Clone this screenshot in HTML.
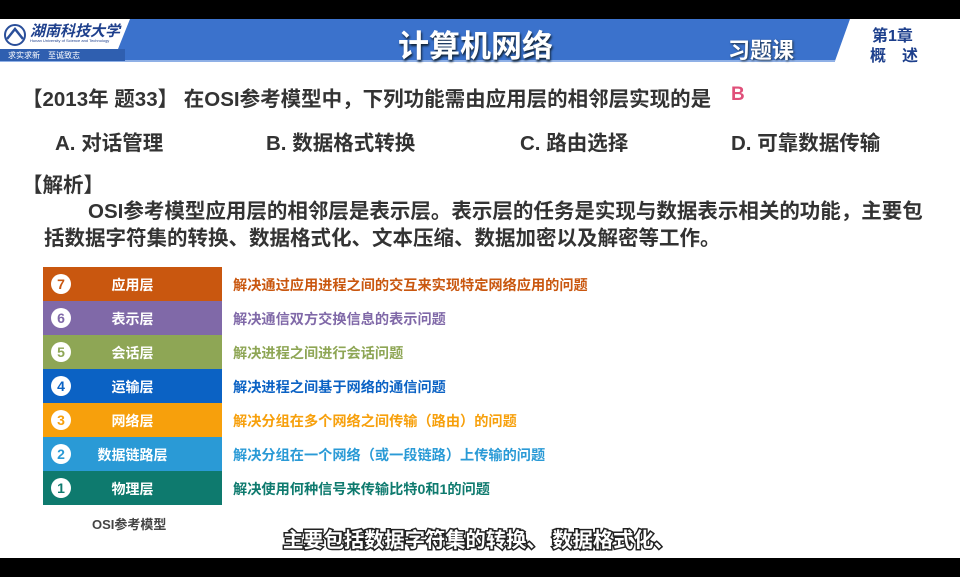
<!DOCTYPE html>
<html><head><meta charset="utf-8"><style>
*{margin:0;padding:0;box-sizing:border-box}
body{width:960px;height:577px;background:#fff;position:relative;overflow:hidden;font-family:"Liberation Sans","Noto Sans CJK SC",sans-serif;color:#333}
.abs{position:absolute;white-space:nowrap}
.row{position:absolute;left:43px;width:179px;height:34px;color:#fff;font-weight:bold;font-size:14px}
.row .n{position:absolute;left:8px;top:7px;width:20px;height:20px;border-radius:50%;background:#fff;font-size:14px;text-align:center;line-height:20px}
.row .t{position:absolute;left:0;width:179px;text-align:center;top:8px;padding-left:0}
.d{position:absolute;left:233px;font-size:14.2px;font-weight:bold;white-space:nowrap}
.q{font-size:20.5px;font-weight:bold}
</style></head><body>
<div class="abs" style="left:0;top:0;width:960px;height:19px;background:#000"></div>
<div class="abs" style="left:0;top:558px;width:960px;height:19px;background:#000"></div>
<svg class="abs" style="left:0;top:19px" width="960" height="44">
<polygon points="0,0 850,0 835,42 0,42" fill="#3b72cc"/>
<rect x="0" y="41" width="835" height="2" fill="#8fb0e6"/>
<polygon points="0,0 130,0 118,30 0,30" fill="#fff"/>
<rect x="0" y="30" width="125" height="12" fill="#2f5fb0"/>
<circle cx="15" cy="16" r="10" fill="#fff" stroke="#2a4f9a" stroke-width="2"/>
<path d="M7,20 L15,10 L23,20" stroke="#2a4f9a" stroke-width="2.5" fill="none"/>
</svg>
<div class="abs" style="left:30px;top:20px;font-size:15px;color:#1d3f8c;font-weight:bold;font-style:italic">湖南科技大学</div>
<div class="abs" style="left:30px;top:38px;font-size:4px;color:#1d3f8c">Hunan University of Science and Technology</div>
<div class="abs" style="left:8px;top:50px;font-size:8px;color:#fff">求实求新　至诚致志</div>
<div class="abs" style="left:398px;top:21px;font-size:31px;font-weight:bold;color:#fff;text-shadow:1px 2px 2px #123">计算机网络</div>
<div class="abs" style="left:728px;top:33px;font-size:22px;font-weight:bold;color:#fff;text-shadow:1px 1px 2px #234">习题课</div>
<div class="abs" style="left:872px;top:22px;font-size:16px;font-weight:bold;color:#1d3f8c">第1章</div>
<div class="abs" style="left:870px;top:42px;font-size:16px;font-weight:bold;color:#1d3f8c">概　述</div>

<div class="abs q" style="left:22px;top:82px">【2013年 题33】 在OSI参考模型中，下列功能需由应用层的相邻层实现的是</div>
<div class="abs" style="left:731px;top:84px;font-size:19px;font-weight:bold;color:#e0507a">B</div>
<div class="abs q" style="left:55px;top:126px">A. 对话管理</div>
<div class="abs q" style="left:266px;top:126px">B. 数据格式转换</div>
<div class="abs q" style="left:520px;top:126px">C. 路由选择</div>
<div class="abs q" style="left:731px;top:126px">D. 可靠数据传输</div>
<div class="abs q" style="left:22px;top:168px">【解析】</div>
<div class="abs q" style="left:88px;top:194px">OSI参考模型应用层的相邻层是表示层。表示层的任务是实现与数据表示相关的功能，主要包</div>
<div class="abs q" style="left:44px;top:221px">括数据字符集的转换、数据格式化、文本压缩、数据加密以及解密等工作。</div>

<div class="row" style="top:267px;background:#c9570f"><span class="n" style="color:#c9570f">7</span><span class="t">应用层</span></div>
<div class="row" style="top:301px;background:#8069a8"><span class="n" style="color:#8069a8">6</span><span class="t">表示层</span></div>
<div class="row" style="top:335px;background:#8ea655"><span class="n" style="color:#8ea655">5</span><span class="t">会话层</span></div>
<div class="row" style="top:369px;background:#0b62c4"><span class="n" style="color:#0b62c4">4</span><span class="t">运输层</span></div>
<div class="row" style="top:403px;background:#f7a00c"><span class="n" style="color:#f7a00c">3</span><span class="t">网络层</span></div>
<div class="row" style="top:437px;background:#2a9ad6"><span class="n" style="color:#2a9ad6">2</span><span class="t">数据链路层</span></div>
<div class="row" style="top:471px;background:#0e7a6e"><span class="n" style="color:#0e7a6e">1</span><span class="t">物理层</span></div>

<div class="d" style="top:275px;color:#c9570f">解决通过应用进程之间的交互来实现特定网络应用的问题</div>
<div class="d" style="top:309px;color:#8069a8">解决通信双方交换信息的表示问题</div>
<div class="d" style="top:343px;color:#8ea655">解决进程之间进行会话问题</div>
<div class="d" style="top:377px;color:#0b62c4">解决进程之间基于网络的通信问题</div>
<div class="d" style="top:411px;color:#f7a00c">解决分组在多个网络之间传输（路由）的问题</div>
<div class="d" style="top:445px;color:#2a9ad6">解决分组在一个网络（或一段链路）上传输的问题</div>
<div class="d" style="top:479px;color:#0e7a6e">解决使用何种信号来传输比特0和1的问题</div>
<div class="abs" style="left:92px;top:514px;font-size:13px;font-weight:bold;color:#444">OSI参考模型</div>
<div class="abs" style="left:283px;top:523px;font-size:20.3px;color:#fff;-webkit-text-stroke:3px #222;paint-order:stroke fill;font-weight:bold">主要包括数据字符集的转换、 数据格式化、</div>
</body></html>
